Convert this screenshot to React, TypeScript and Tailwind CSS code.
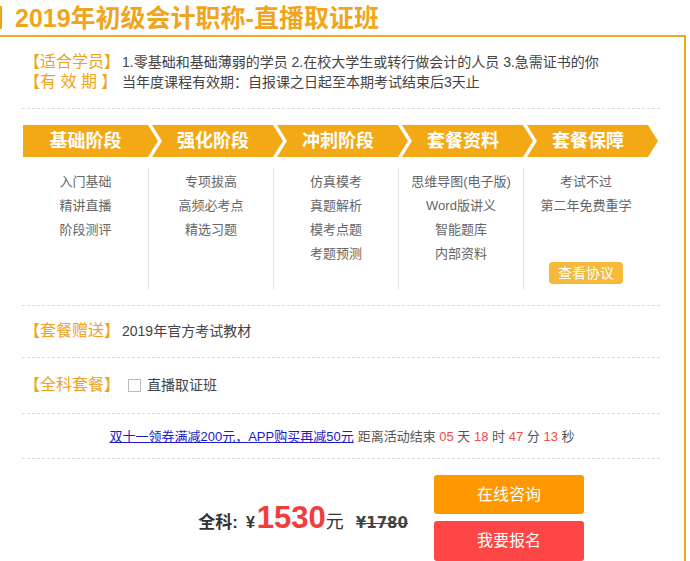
const stages = [
  { title: "基础阶段", items: ["入门基础", "精讲直播", "阶段测评"] },
  { title: "强化阶段", items: ["专项拔高", "高频必考点", "精选习题"] },
  { title: "冲刺阶段", items: ["仿真模考", "真题解析", "模考点题", "考题预测"] },
  { title: "套餐资料", items: ["思维导图(电子版)", "Word版讲义", "智能题库", "内部资料"] },
  { title: "套餐保障", items: ["考试不过", "第二年免费重学"] },
];

function Dashed() {
  return <div className="ml-[22px] w-[638px] border-t border-dashed border-[#dcdcdc]" />;
}

function Label({ children }: { children: React.ReactNode }) {
  return (
    <span className="w-[98px] shrink-0 whitespace-pre text-[16px] leading-[20px] text-[#eda41c]">{children}</span>
  );
}

export default function App() {
  return (
    <div className="h-[561px] w-[690px] overflow-hidden bg-white font-['Liberation_Sans','Noto_Sans_CJK_SC',sans-serif] text-[#333]">
      {/* title */}
      <div className="flex h-[35px] items-center">
        <div className="h-[23px] w-[2px] bg-[#f0a51c]" />
        <h1 className="ml-[13px] text-[25px] font-bold leading-[30px] text-[#f0a51c]">2019年初级会计职称-直播取证班</h1>
      </div>

      <div className="h-[600px] w-[686px] border-t-2 border-r-2 border-[#f0a81e]">
        {/* who / validity */}
        <div className="flex flex-col pl-[24px] pt-[15px]">
          <div className="flex items-center">
            <Label>【适合学员】</Label>
            <span className="text-[14px] leading-[20px] text-[#444]">
              1.零基础和基础薄弱的学员 2.在校大学生或转行做会计的人员 3.急需证书的你
            </span>
          </div>
          <div className="flex items-center">
            <Label>【有 效 期 】</Label>
            <span className="text-[14px] leading-[20px] text-[#444]">当年度课程有效期：自报课之日起至本期考试结束后3天止</span>
          </div>
        </div>

        <div className="mt-[16px]">
          <Dashed />
        </div>

        {/* stage bar */}
        <div className="mt-[16px] flex pl-[23px]">
          {stages.map((s, i) => (
            <div
              key={s.title}
              className={
                i === 0
                  ? "-mr-[10px] flex h-[32px] w-[135px] items-center justify-center bg-[#f2a915] pr-[10px] text-[18px] font-bold text-white [clip-path:polygon(0_0,125px_0,135px_50%,125px_100%,0_100%)]"
                  : "-mr-[10px] flex h-[32px] w-[135px] items-center justify-center bg-[#f2a915] pl-[5px] pr-[10px] text-[18px] font-bold text-white [clip-path:polygon(4px_0,125px_0,135px_50%,125px_100%,4px_100%,14px_50%)]"
              }
            >
              {s.title}
            </div>
          ))}
        </div>

        {/* stage columns */}
        <div className="mt-[11px] flex h-[122px] pl-[23px]">
          {stages.map((s, i) => (
            <div
              key={s.title}
              className={
                i === 0
                  ? "flex w-[125px] flex-col items-center pt-[2px]"
                  : "flex w-[125px] flex-col items-center border-l border-[#e2e2e2] pt-[2px]"
              }
            >
              {s.items.map((it) => (
                <div key={it} className="text-[13px] leading-[24px] text-[#666]">
                  {it}
                </div>
              ))}
              {i === 4 && (
                <button className="mt-[44px] h-[22px] w-[74px] rounded-[4px] bg-[#f6b93a] text-[14px] leading-[22px] text-white">
                  查看协议
                </button>
              )}
            </div>
          ))}
        </div>

        <div className="mt-[15px]">
          <Dashed />
        </div>

        <div className="mt-[15px] flex items-center pl-[24px]">
          <Label>【套餐赠送】</Label>
          <span className="text-[14px] leading-[20px] text-[#444]">2019年官方考试教材</span>
        </div>

        <div className="mt-[16px]">
          <Dashed />
        </div>

        <div className="mt-[17px] flex items-center pl-[24px]">
          <Label>【全科套餐】</Label>
          <label className="flex items-center gap-[6px] text-[14px] leading-[20px] text-[#444]">
            <span className="ml-[6px] h-[13px] w-[13px] border border-[#bbb] bg-white" />
            直播取证班
          </label>
        </div>

        <div className="mt-[18px]">
          <Dashed />
        </div>

        {/* promo */}
        <div className="mt-[13px] flex justify-center text-[13px] leading-[20px]">
          <a href="#" className="text-[#1a1ad0] underline">
            双十一领券满减200元，APP购买再减50元
          </a>
          <span className="ml-[4px] text-[#555]">
            距离活动结束 <span className="text-[#f24a4a]">05</span> 天 <span className="text-[#f24a4a]">18</span> 时{" "}
            <span className="text-[#f24a4a]">47</span> 分 <span className="text-[#f24a4a]">13</span> 秒
          </span>
        </div>

        <div className="mt-[11px]">
          <Dashed />
        </div>

        {/* price + actions */}
        <div className="mt-[16px] flex items-center justify-end gap-[26px] pr-[100px]">
          <div className="flex items-baseline text-[#333]">
            <span className="text-[17px] font-bold">全科:</span>
            <span className="ml-[8px] text-[16px] font-bold">¥</span>
            <span className="ml-[2px] text-[31px] font-bold leading-[36px] text-[#f23d3d]">1530</span>
            <span className="text-[18px]">元</span>
            <span className="ml-[12px] font-['DejaVu_Sans',sans-serif] text-[15px] font-bold text-[#444] line-through">¥1780</span>
          </div>
          <div className="flex w-[150px] flex-col gap-[7px]">
            <button className="h-[39px] rounded-[3px] bg-[#ff9800] text-[16px] text-white">在线咨询</button>
            <button className="h-[40px] rounded-[3px] bg-[#ff4646] text-[16px] text-white">我要报名</button>
          </div>
        </div>
      </div>
    </div>
  );
}
